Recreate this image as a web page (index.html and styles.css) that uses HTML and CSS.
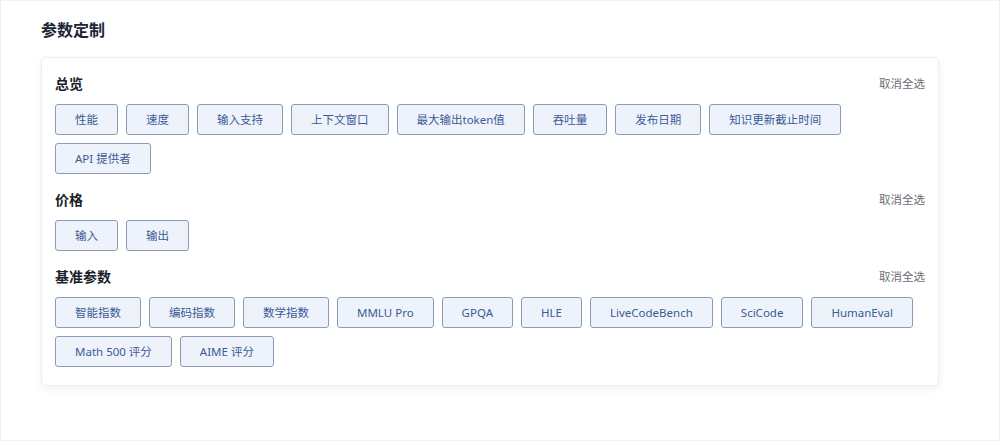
FILE: index.html
```html
<!DOCTYPE html>
<html lang="zh-CN">
<head>
<meta charset="utf-8">
<title>参数定制</title>
<link rel="stylesheet" href="styles.css">
</head>
<body>
<div class="page">
  <h1 class="title">参数定制</h1>
  <div class="card">
    <section class="group">
      <div class="group-head">
        <h2 class="group-title">总览</h2>
        <span class="clear">取消全选</span>
      </div>
      <div class="chips">
        <button class="chip">性能</button>
        <button class="chip">速度</button>
        <button class="chip">输入支持</button>
        <button class="chip">上下文窗口</button>
        <button class="chip">最大输出token值</button>
        <button class="chip">吞吐量</button>
        <button class="chip">发布日期</button>
        <button class="chip">知识更新截止时间</button>
        <button class="chip">API 提供者</button>
      </div>
    </section>
    <section class="group">
      <div class="group-head">
        <h2 class="group-title">价格</h2>
        <span class="clear">取消全选</span>
      </div>
      <div class="chips">
        <button class="chip">输入</button>
        <button class="chip">输出</button>
      </div>
    </section>
    <section class="group">
      <div class="group-head">
        <h2 class="group-title">基准参数</h2>
        <span class="clear">取消全选</span>
      </div>
      <div class="chips">
        <button class="chip">智能指数</button>
        <button class="chip">编码指数</button>
        <button class="chip">数学指数</button>
        <button class="chip">MMLU Pro</button>
        <button class="chip">GPQA</button>
        <button class="chip">HLE</button>
        <button class="chip">LiveCodeBench</button>
        <button class="chip">SciCode</button>
        <button class="chip">HumanEval</button>
        <button class="chip">Math 500 评分</button>
        <button class="chip">AIME 评分</button>
      </div>
    </section>
  </div>
</div>
</body>
</html>
```
FILE: styles.css
```css
* { box-sizing: border-box; }
html, body {
  margin: 0;
  padding: 0;
  background: #fff;
}
body {
  font-family: "Noto Sans", "Noto Sans CJK SC", sans-serif;
  color: #1f2937;
}
.page {
  min-height: 441px;
  border: 1px solid #f1f1f3;
  padding: 18px 60px 0 40px;
}
.title {
  margin: 0 0 16px;
  font-size: 16px;
  line-height: 22px;
  font-weight: 700;
  color: #1d2536;
}
.card {
  width: 898px;
  border: 1px solid #eceef1;
  border-radius: 5px;
  background: #fff;
  box-shadow: 0 3px 8px rgba(30, 40, 70, 0.06);
  padding: 16px 13px 18px;
  display: flex;
  flex-direction: column;
  gap: 16px;
}
.group-head {
  display: flex;
  justify-content: space-between;
  align-items: center;
  height: 20px;
  margin-bottom: 10px;
}
.group-title {
  margin: 0;
  font-size: 14px;
  line-height: 20px;
  font-weight: 700;
  color: #1a1f2b;
}
.clear {
  font-size: 11.5px;
  color: #6b6f76;
  margin-top: -2px;
}
.chips {
  display: flex;
  flex-wrap: wrap;
  gap: 8px 8px;
}
.chip {
  height: 31px;
  padding: 0 19px;
  border: 1px solid #8b9bb3;
  border-radius: 3px;
  background: #eef3fb;
  color: #3b5a96;
  font-family: "Noto Sans", "Noto Sans CJK SC", sans-serif;
  font-size: 11.5px;
  line-height: 29px;
  cursor: pointer;
}
```
